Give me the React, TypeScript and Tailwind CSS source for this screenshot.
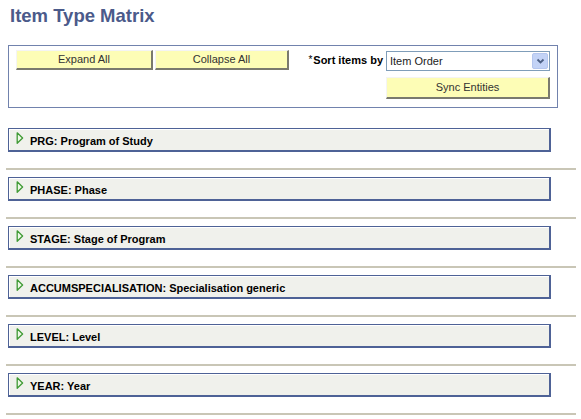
import React from 'react';

const groups = [
  'PRG: Program of Study',
  'PHASE: Phase',
  'STAGE: Stage of Program',
  'ACCUMSPECIALISATION: Specialisation generic',
  'LEVEL: Level',
  'YEAR: Year',
];

function YellowButton({ label, className }: { label: string; className: string }) {
  return (
    <button
      type="button"
      className={`flex items-center justify-center bg-[#fdfdb6] text-[11px] text-[#333] border border-t-[#f4f4f4] border-l-[#f4f4f4] border-r-[#7a7a6e] border-b-[#7a7a6e] border-r-2 border-b-2 ${className}`}
    >
      {label}
    </button>
  );
}

function Triangle() {
  return (
    <svg width="8" height="12" viewBox="0 0 8 12" className="shrink-0">
      <path d="M1.2 0.8 L6.6 6 L1.2 11.2 Z" fill="#eef8e6" stroke="#3f9a34" strokeWidth="1.3" strokeLinejoin="round" />
    </svg>
  );
}

function App() {
  return (
    <div className="w-[581px] h-[419px] bg-white overflow-hidden font-['Liberation_Sans',Arial,sans-serif]">
      <h1 className="pl-[10px] pt-[5px] h-[45px] text-[18.5px] font-bold text-[#4b5a8a] leading-[22px]">
        Item Type Matrix
      </h1>

      <div className="ml-[8px] w-[550px] h-[63px] border border-[#7182ad] pl-[7px] pr-[7px] pt-[4px]">
        <div className="flex items-start">
          <YellowButton label="Expand All" className="w-[137px] h-[20px]" />
          <YellowButton label="Collapse All" className="ml-[2px] w-[134px] h-[20px]" />
          <div className="ml-auto flex flex-col items-end">
            <div className="flex items-center">
              <span className="text-[11px] font-bold text-black mr-[3px]">
                <span className="font-normal text-[10px] mr-[1px] relative -top-[1px]">*</span>Sort items by
              </span>
              <div className="w-[164px] h-[20px] border border-[#7f9db9] bg-white flex items-center mt-[1px]">
                <span className="flex-1 pl-[3px] text-[11px] text-[#222]">Item Order</span>
                <div className="w-[16px] h-[16px] mr-[1px] bg-[#c3d3f6] border border-[#b4c6ee] rounded-[2px] flex items-center justify-center">
                  <svg width="9" height="7" viewBox="0 0 9 7">
                    <path d="M1.5 1.5 L4.5 4.5 L7.5 1.5" fill="none" stroke="#4d6185" strokeWidth="1.8" />
                  </svg>
                </div>
              </div>
            </div>
            <YellowButton label="Sync Entities" className="mt-[6px] w-[164px] h-[22px]" />
          </div>
        </div>
      </div>

      <div className="mt-[20px]">
        {groups.map((g) => (
          <div key={g} className="h-[49px]">
            <div className="ml-[8px] w-[543px] h-[24px] bg-[#f0f1ec] border border-[#4e6296] border-r-2 border-b-2 shadow-[inset_1px_1px_0_#ffffff] flex items-start pl-[7px] pt-[3px]">
              <Triangle />
              <span className="ml-[6px] mt-[3px] text-[11px] leading-[13px] font-bold text-black">{g}</span>
            </div>
            <div className="ml-[6px] mt-[16px] w-[570px] h-[2px] bg-[#c9c6b6]" />
          </div>
        ))}
      </div>
    </div>
  );
}

export default App;
